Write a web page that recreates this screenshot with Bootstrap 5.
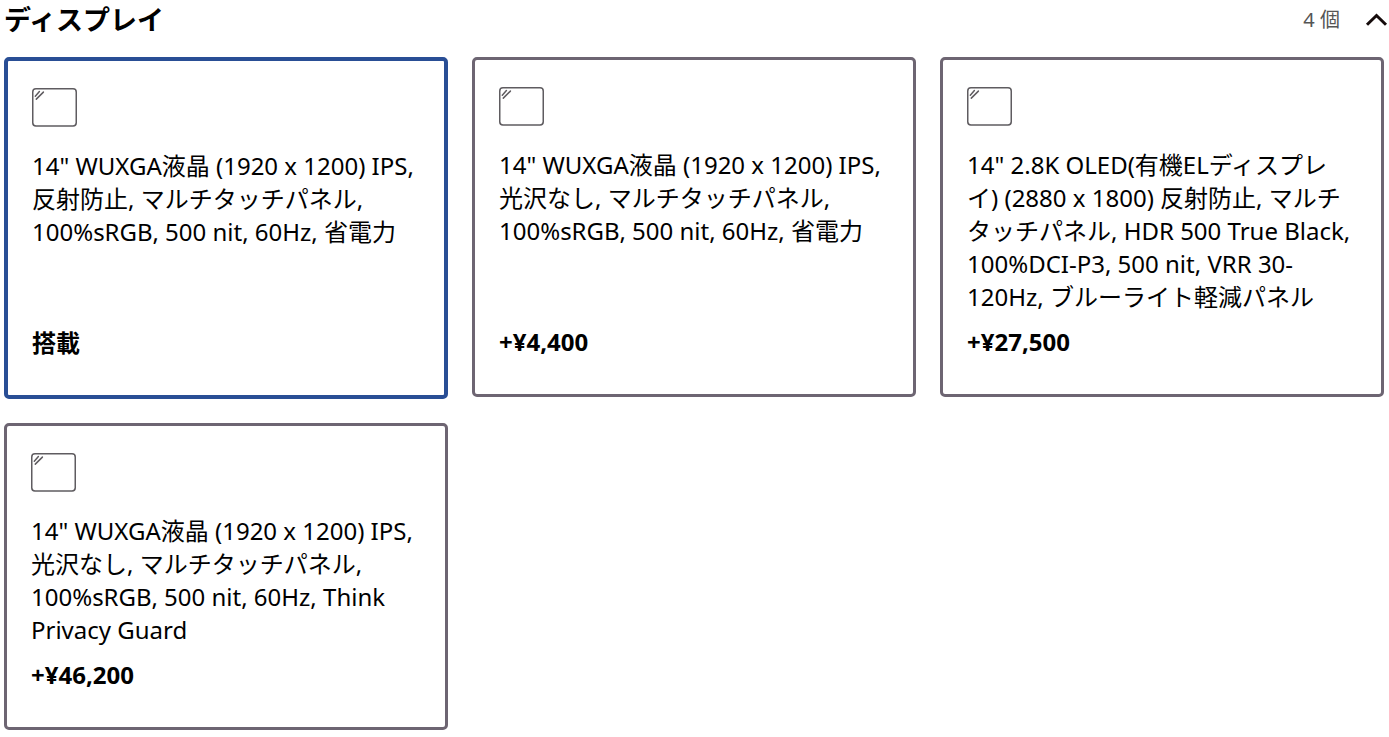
<!DOCTYPE html>
<html lang="ja">
<head>
<meta charset="utf-8">
<meta name="viewport" content="width=device-width, initial-scale=1">
<title>ディスプレイ</title>
<link rel="stylesheet" href="https://cdn.jsdelivr.net/npm/bootstrap@5.3.0/dist/css/bootstrap.min.css">
<style>
body { font-family: "Noto Sans", "Noto Sans CJK JP", sans-serif; color: #000; background: #fff; }
.group-head { height: 57px; padding: 2px 0 0 4px; }
.group-title { font-size: 27px; line-height: 36px; }
.group-count { font-size: 20px; line-height: 36px; color: #555; }
.option-grid { padding: 0 5px 5px 4px; column-gap: 24px; row-gap: 26px; display: grid; grid-template-columns: repeat(3, minmax(0, 1fr)); }
.option { border: 3px solid #6d6572; border-radius: 5px; padding: 27px 24px 36px; font-size: 24px; line-height: 33px; color: #000; background: #fff; }
.option svg { margin-bottom: 22px; }
.option.chosen { border: 4px solid #294e95; }
.chosen-cell { margin-bottom: -2px; }
@media (max-width: 991px) { .option-grid { grid-template-columns: repeat(2, minmax(0, 1fr)); } }
@media (max-width: 575px) { .option-grid { grid-template-columns: minmax(0, 1fr); } }
</style>
</head>
<body>
<svg class="d-none" aria-hidden="true">
  <symbol id="screen" viewBox="0 0 45 39">
    <g fill="none" stroke="#5f5c60" stroke-width="1.5">
      <rect x=".75" y=".75" width="43.5" height="37.3" rx="3.2"/>
      <path d="M3.3 8.2 7.4 3.6M4.3 11.1 11.4 4.1" stroke-linecap="round"/>
    </g>
  </symbol>
</svg>
<main>
  <header class="group-head d-flex justify-content-between align-items-start">
    <h2 class="group-title fw-bold m-0">ディスプレイ</h2>
    <button type="button" class="btn p-0 border-0 d-flex align-items-center" aria-expanded="true" aria-controls="options">
      <span class="group-count">4 個</span>
      <svg class="ms-4" width="25" height="18" viewBox="0 0 25 18" fill="none" stroke="#150b0b" stroke-width="3" aria-hidden="true"><path d="M3 13.8 12.5 4.5 22 13.8"/></svg>
    </button>
  </header>
  <ul class="option-grid list-unstyled m-0" id="options">
    <li class="chosen-cell">
      <button type="button" class="option chosen w-100 h-100 d-flex flex-column align-items-start text-start" aria-pressed="true">
        <svg class="flex-shrink-0" width="45" height="39" aria-hidden="true"><use href="#screen"/></svg>
        <span class="flex-grow-1">14" WUXGA液晶 (1920 x 1200) IPS, 反射防止, マルチタッチパネル, 100%sRGB, 500 nit, 60Hz, 省電力</span>
        <strong class="mt-2 pt-1">搭載</strong>
      </button>
    </li>
    <li>
      <button type="button" class="option w-100 h-100 d-flex flex-column align-items-start text-start" aria-pressed="false">
        <svg class="flex-shrink-0" width="45" height="39" aria-hidden="true"><use href="#screen"/></svg>
        <span class="flex-grow-1">14" WUXGA液晶 (1920 x 1200) IPS, 光沢なし, マルチタッチパネル, 100%sRGB, 500 nit, 60Hz, 省電力</span>
        <strong class="mt-2 pt-1">+¥4,400</strong>
      </button>
    </li>
    <li>
      <button type="button" class="option w-100 h-100 d-flex flex-column align-items-start text-start" aria-pressed="false">
        <svg class="flex-shrink-0" width="45" height="39" aria-hidden="true"><use href="#screen"/></svg>
        <span class="flex-grow-1">14" 2.8K OLED(有機ELディスプレイ) (2880 x 1800) 反射防止, マルチタッチパネル, HDR 500 True Black, 100%DCI-P3, 500 nit, VRR 30-120Hz, ブルーライト軽減パネル</span>
        <strong class="mt-2 pt-1">+¥27,500</strong>
      </button>
    </li>
    <li>
      <button type="button" class="option w-100 h-100 d-flex flex-column align-items-start text-start" aria-pressed="false">
        <svg class="flex-shrink-0" width="45" height="39" aria-hidden="true"><use href="#screen"/></svg>
        <span class="flex-grow-1">14" WUXGA液晶 (1920 x 1200) IPS, 光沢なし, マルチタッチパネル, 100%sRGB, 500 nit, 60Hz, Think Privacy Guard</span>
        <strong class="mt-2 pt-1">+¥46,200</strong>
      </button>
    </li>
  </ul>
</main>
<script src="https://cdn.jsdelivr.net/npm/bootstrap@5.3.0/dist/js/bootstrap.bundle.min.js"></script>
</body>
</html>
